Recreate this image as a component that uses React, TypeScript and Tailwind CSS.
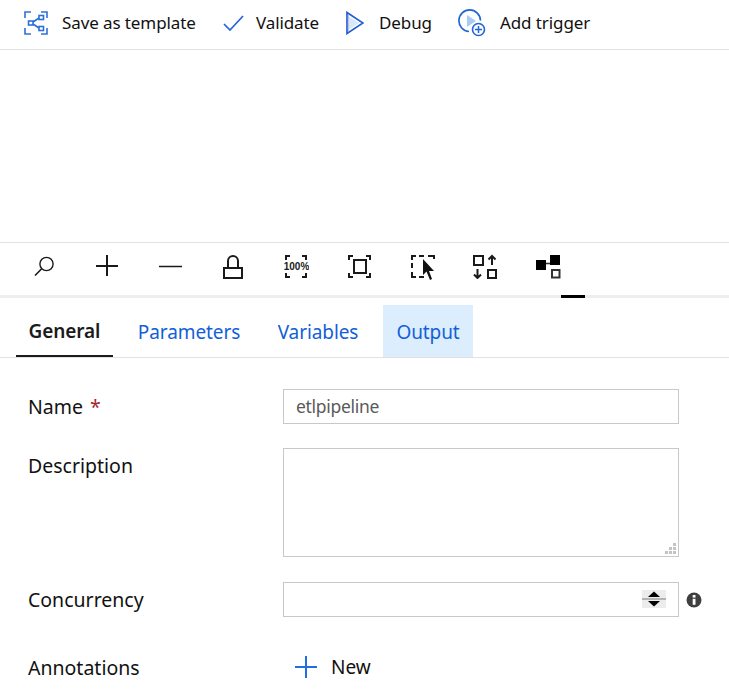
const font = "font-['Noto_Sans','Open_Sans',sans-serif]"

const ic = { width: 26, height: 26, viewBox: '0 0 26 26', fill: 'none' }

function TemplateIcon() {
  return (
    <svg width="24" height="24" viewBox="0 0 24 24" fill="none" stroke="#2f6fdb" strokeWidth="1.6">
      <path d="M1 7V1h6M17 1h6v6M1 17v6h6M23 17v6h-6" />
      <rect x="15" y="4.5" width="4.5" height="4" />
      <rect x="15" y="15.5" width="4.5" height="4" />
      <rect x="4.5" y="10" width="4.5" height="4" />
      <path d="M9 11l6-4M9 13l6 4" />
    </svg>
  )
}

function CheckIcon() {
  return (
    <svg width="21" height="16" viewBox="0 0 21 16" fill="none" stroke="#2563d8" strokeWidth="1.7">
      <path d="M1 9l6 6L20 1" />
    </svg>
  )
}

function PlayIcon() {
  return (
    <svg width="18" height="24" viewBox="0 0 18 24" fill="none">
      <path d="M1 1.5L17 12 1 22.5z" fill="#ffffff" stroke="#1f5fd6" strokeWidth="1.7" />
      <path d="M2 4v16" stroke="#8a7fc8" strokeWidth="1" />
      <path d="M3 5.5L13 12 3 18.5z" fill="#d5e9fb" />
    </svg>
  )
}

function TriggerIcon() {
  return (
    <svg width="28" height="28" viewBox="0 0 28 28" fill="none">
      <path d="M22.5 11.5A10.8 10.8 0 1 0 11 22.5" stroke="#1f66d6" strokeWidth="1.7" />
      <path d="M9 6l9 6-9 6z" fill="#a9cdf2" />
      <circle cx="20.5" cy="20.5" r="6" fill="#ffffff" stroke="#1f66d6" strokeWidth="1.6" />
      <path d="M17 20.5h7M20.5 17v7" stroke="#1f66d6" strokeWidth="1.5" />
    </svg>
  )
}

function ZoomIcon() {
  return (
    <svg {...ic} stroke="#1a1a1a" strokeWidth="1.4">
      <circle cx="15.5" cy="11" r="6.6" />
      <path d="M10.7 15.8L4 22.5" strokeWidth="1.6" />
    </svg>
  )
}

function PlusIcon() {
  return (
    <svg {...ic} stroke="#1a1a1a" strokeWidth="2">
      <path d="M2 13h22M13 2v21" />
    </svg>
  )
}

function MinusIcon() {
  return (
    <svg {...ic} stroke="#1a1a1a" strokeWidth="1.5">
      <path d="M2 13.5h23" />
    </svg>
  )
}

function LockIcon() {
  return (
    <svg {...ic} stroke="#1a1a1a" strokeWidth="2">
      <rect x="4" y="15" width="18" height="10" />
      <path d="M8 15V8a5 5 0 0 1 10 0v7" />
    </svg>
  )
}

function HundredIcon() {
  return (
    <svg {...ic} stroke="#1a1a1a" strokeWidth="2">
      <path d="M7 3H3v4M19 3h4v4M3 20v4h4M23 20v4h-4" />
      <text x="13.5" y="17" textAnchor="middle" fontSize="10" fontWeight="700" fill="#1a1a1a" stroke="none" fontFamily="Liberation Sans, sans-serif">100%</text>
    </svg>
  )
}

function FitIcon() {
  return (
    <svg {...ic} stroke="#1a1a1a" strokeWidth="2">
      <path d="M7 3H3v4M20 3h4v4M3 20v4h4M24 20v4h-4" />
      <rect x="8" y="7" width="12" height="13" />
    </svg>
  )
}

function SelectIcon() {
  return (
    <svg {...ic} className="overflow-visible" stroke="#1a1a1a" strokeWidth="2">
      <path d="M7 3H3v4M10 3h5M19 3h6v3M3 10v5M3 19v5h4M10 24h5" />
      <path d="M14 6v16l3.5-3.5L21 27l2-1-3-8h5z" fill="#111111" stroke="none" />
    </svg>
  )
}

function SwapIcon() {
  return (
    <svg {...ic} stroke="#1a1a1a" strokeWidth="2">
      <rect x="2" y="3" width="9" height="9" />
      <rect x="16" y="17" width="8" height="8" />
      <path d="M20 12V3M16.5 6.5L20 3l3.5 3.5M5.5 16v9M2 21.5L5.5 25 9 21.5" />
    </svg>
  )
}

function LayoutIcon() {
  return (
    <svg {...ic}>
      <rect x="1" y="7" width="10" height="10" fill="#000000" />
      <rect x="15" y="2" width="10" height="10" fill="#000000" />
      <path d="M11 10.5h4" stroke="#333333" strokeWidth="1.6" />
      <rect x="17" y="17" width="7.5" height="7.5" stroke="#333333" strokeWidth="2" />
    </svg>
  )
}

const actions = [
  { label: 'Save as template', icon: <TemplateIcon />, w: 'w-[199px]', iw: 'w-[38px]' },
  { label: 'Validate', icon: <CheckIcon />, w: 'w-[123px]', iw: 'w-[33px]' },
  { label: 'Debug', icon: <PlayIcon />, w: 'w-[112px]', iw: 'w-[33px]' },
  { label: 'Add trigger', icon: <TriggerIcon />, w: 'w-[200px]', iw: 'w-[42px]' },
]

const tools = [<ZoomIcon />, <PlusIcon />, <MinusIcon />, <LockIcon />, <HundredIcon />, <FitIcon />, <SelectIcon />, <SwapIcon />, <LayoutIcon />]

const tabs = [
  { label: 'General', cls: 'w-[97px] font-semibold text-[#1b1b1b] border-b-2 border-[#1b1b1b] ml-[16px]' },
  { label: 'Parameters', cls: 'w-[152px] text-[#1160d8]' },
  { label: 'Variables', cls: 'w-[106px] text-[#1160d8] mr-[12px]' },
  { label: 'Output', cls: 'w-[90px] text-[#1160d8] bg-[#dcedfd]' },
]

export default function App() {
  return (
    <div className={`w-[729px] h-[696px] overflow-hidden bg-white text-[#111111] text-[19.5px] ${font}`}>
      {/* Top actions */}
      <div className="h-[50px] pl-[24px] flex items-center border-b border-[#e1e1e1] text-[17px] tracking-[-0.1px]">
        {actions.map(a => (
          <div key={a.label} className={`${a.w} flex items-center shrink-0 -mt-[4px]`}>
            <div className={`${a.iw} shrink-0 flex items-center`}>{a.icon}</div>
            <span className="whitespace-nowrap">{a.label}</span>
          </div>
        ))}
      </div>

      {/* Empty canvas */}
      <div className="h-[192px]" />

      {/* Canvas tools */}
      <div className="h-[53px] pl-[12px] pt-[10px] flex items-start border-t border-[#e1e1e1]">
        {tools.map((t, i) => (
          <div key={i} className="w-[63px] pl-[19px] flex shrink-0">{t}</div>
        ))}
      </div>
      <div className="h-[3px] bg-[#eeeeee] pl-[561px]">
        <div className="h-[3px] w-[24px] bg-black" />
      </div>

      {/* Tabs */}
      <div className="h-[60px] pt-[7px] flex border-b border-[#e1e1e1] text-[19px] tracking-[-0.1px]">
        {tabs.map(t => (
          <div key={t.label} className={`${t.cls} h-[52px] pt-[2px] flex items-center justify-center shrink-0 whitespace-nowrap`}>
            {t.label}
          </div>
        ))}
      </div>

      {/* Form */}
      <div className="pt-[31px] pl-[28px]">
        <div className="flex items-center h-[35px]">
          <div className="w-[255px]">Name <span className="text-[#a4262c] ml-[2px]">*</span></div>
          <div className="w-[396px] h-[35px] border border-[#c8c8c8] flex items-center pl-[12px] text-[#5a5a5a] text-[17.5px] tracking-[-0.3px]">etlpipeline</div>
        </div>
        <div className="flex items-start mt-[24px]">
          <div className="w-[255px] leading-[36px]">Description</div>
          <div className="relative w-[396px] h-[109px] border border-[#c8c8c8]">
            <svg className="absolute right-[2px] bottom-[2px]" width="11" height="11" viewBox="0 0 11 11" fill="#c4c4c4">
              <rect x="8" y="0" width="3" height="3" />
              <rect x="4" y="4" width="3" height="3" />
              <rect x="8" y="4" width="3" height="3" />
              <rect x="0" y="8" width="3" height="3" />
              <rect x="4" y="8" width="3" height="3" />
              <rect x="8" y="8" width="3" height="3" />
            </svg>
          </div>
        </div>
        <div className="flex items-center h-[35px] mt-[25px]">
          <div className="w-[255px]">Concurrency</div>
          <div className="w-[396px] h-[35px] border border-[#c8c8c8] flex items-start justify-end pt-[7px] pr-[12px]">
            <svg width="24" height="18" viewBox="0 0 24 18">
              <rect width="24" height="18" fill="#ececec" />
              <rect y="8" width="24" height="2" fill="#b4b4b4" />
              <path d="M12 1.5L18 7H6z" fill="#000000" />
              <path d="M12 16.5L6 11h12z" fill="#000000" />
            </svg>
          </div>
          <svg className="ml-[7px] self-start mt-[10px]" width="16" height="16" viewBox="0 0 16 16">
            <circle cx="8" cy="8" r="7.5" fill="#3f3f3f" />
            <rect x="6.7" y="3" width="2.8" height="2.6" fill="#ffffff" />
            <rect x="6.7" y="6.8" width="2.8" height="6" fill="#ffffff" />
          </svg>
        </div>
        <div className="flex items-center h-[36px] mt-[32px]">
          <div className="w-[255px] pt-[1px]">Annotations</div>
          <div className="flex items-center pl-[11px] text-[19px]">
            <svg className="mr-[13px]" width="24" height="24" viewBox="0 0 24 24" stroke="#1f6fe0" strokeWidth="2" fill="none">
              <path d="M1 12h22M12 1v22" />
            </svg>
            New
          </div>
        </div>
      </div>
    </div>
  )
}
